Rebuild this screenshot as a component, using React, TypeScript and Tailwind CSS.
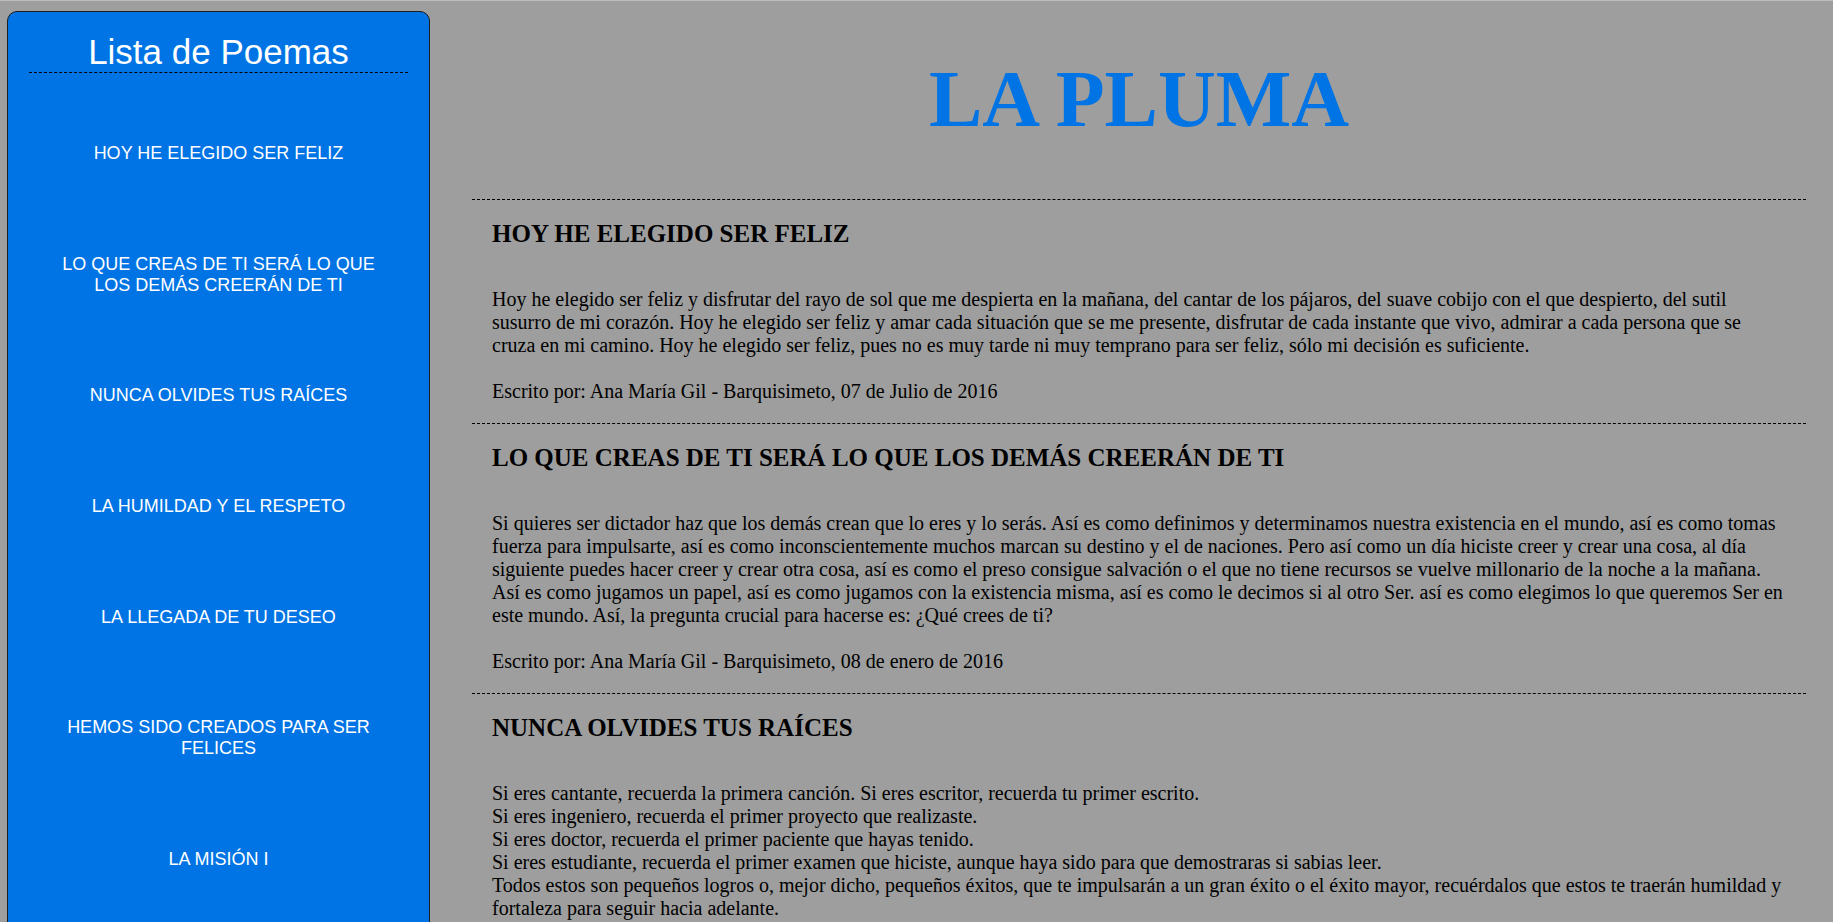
import React from "react";

const navItems = [
  "HOY HE ELEGIDO SER FELIZ",
  "LO QUE CREAS DE TI SERÁ LO QUE LOS DEMÁS CREERÁN DE TI",
  "NUNCA OLVIDES TUS RAÍCES",
  "LA HUMILDAD Y EL RESPETO",
  "LA LLEGADA DE TU DESEO",
  "HEMOS SIDO CREADOS PARA SER FELICES",
  "LA MISIÓN I",
];

type Poem = { title: string; lines: string[]; author?: string };

const poems: Poem[] = [
  {
    title: "HOY HE ELEGIDO SER FELIZ",
    lines: [
      "Hoy he elegido ser feliz y disfrutar del rayo de sol que me despierta en la mañana, del cantar de los pájaros, del suave cobijo con el que despierto, del sutil susurro de mi corazón. Hoy he elegido ser feliz y amar cada situación que se me presente, disfrutar de cada instante que vivo, admirar a cada persona que se cruza en mi camino. Hoy he elegido ser feliz, pues no es muy tarde ni muy temprano para ser feliz, sólo mi decisión es suficiente.",
    ],
    author: "Escrito por: Ana María Gil - Barquisimeto, 07 de Julio de 2016",
  },
  {
    title: "LO QUE CREAS DE TI SERÁ LO QUE LOS DEMÁS CREERÁN DE TI",
    lines: [
      "Si quieres ser dictador haz que los demás crean que lo eres y lo serás. Así es como definimos y determinamos nuestra existencia en el mundo, así es como tomas fuerza para impulsarte, así es como inconscientemente muchos marcan su destino y el de naciones. Pero así como un día hiciste creer y crear una cosa, al día siguiente puedes hacer creer y crear otra cosa, así es como el preso consigue salvación o el que no tiene recursos se vuelve millonario de la noche a la mañana. Así es como jugamos un papel, así es como jugamos con la existencia misma, así es como le decimos si al otro Ser. así es como elegimos lo que queremos Ser en este mundo. Así, la pregunta crucial para hacerse es: ¿Qué crees de ti?",
    ],
    author: "Escrito por: Ana María Gil - Barquisimeto, 08 de enero de 2016",
  },
  {
    title: "NUNCA OLVIDES TUS RAÍCES",
    lines: [
      "Si eres cantante, recuerda la primera canción. Si eres escritor, recuerda tu primer escrito.",
      "Si eres ingeniero, recuerda el primer proyecto que realizaste.",
      "Si eres doctor, recuerda el primer paciente que hayas tenido.",
      "Si eres estudiante, recuerda el primer examen que hiciste, aunque haya sido para que demostraras si sabias leer.",
      "Todos estos son pequeños logros o, mejor dicho, pequeños éxitos, que te impulsarán a un gran éxito o el éxito mayor, recuérdalos que estos te traerán humildad y fortaleza para seguir hacia adelante.",
    ],
  },
];

export default function App() {
  return (
    <div className="h-[922px] overflow-hidden border-t border-[#bcbcbc] bg-[#9e9e9e]">
      <div className="flex items-start">
        <aside className="ml-[7px] mt-[10px] h-[1200px] w-[423px] shrink-0 rounded-t-[10px] border border-[#1e1e1e] bg-[#0074e4] font-['Liberation_Sans',Arial,sans-serif] text-white">
          <h2 className="mx-auto mt-[20px] w-[90%] border-b border-dashed border-black text-center text-[35px] font-normal leading-[normal]">
            Lista de Poemas
          </h2>
          <ul className="mt-[25px] px-[42px]">
            {navItems.map((t) => (
              <li key={t} className="py-[44.85px] text-center text-[18px] leading-[normal]">
                {t}
              </li>
            ))}
          </ul>
        </aside>
        <main className="ml-[42px] mr-[27px] min-w-0 flex-1 font-['Liberation_Serif','Times_New_Roman',serif] text-black">
          <h1 className="mb-[53.5px] mt-[53px] text-center text-[80px] font-bold leading-[normal] text-[#0074e4]">
            LA PLUMA
          </h1>
          {poems.map((p) => (
            <section key={p.title} className="border-t border-dashed border-black px-[20px]">
              <h2 className="mt-[20px] text-[25px] font-bold leading-[normal]">{p.title}</h2>
              <p className="mb-[20.3px] mt-[40px] text-[20px] leading-[normal]">
                {p.lines.map((l, i) => (
                  <React.Fragment key={i}>
                    {i > 0 && <br />}
                    {l}
                  </React.Fragment>
                ))}
                {p.author && (
                  <>
                    <br />
                    <br />
                    {p.author}
                  </>
                )}
              </p>
            </section>
          ))}
        </main>
      </div>
    </div>
  );
}
